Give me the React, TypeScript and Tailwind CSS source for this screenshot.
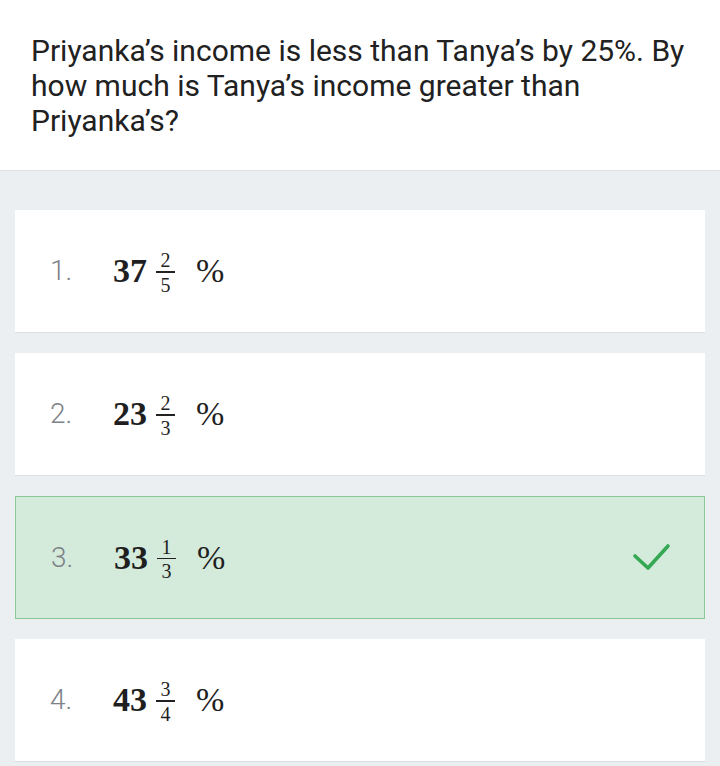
import React from "react";

type Opt = { n: number; whole: string; num: string; den: string; correct?: boolean };

const opts: Opt[] = [
  { n: 1, whole: "37", num: "2", den: "5" },
  { n: 2, whole: "23", num: "2", den: "3" },
  { n: 3, whole: "33", num: "1", den: "3", correct: true },
  { n: 4, whole: "43", num: "3", den: "4" },
];

function Card({ o }: { o: Opt }) {
  return (
    <div
      className={
        "h-[123px] flex items-center pl-[35px] pr-[32px] " +
        (o.correct
          ? "bg-[#d4eadb] border border-[#8cc79a]"
          : "bg-white border-b border-[#dadfe3]")
      }
    >
      <span className="w-[63px] text-[28px] text-[#7d8287] [font-family:Roboto,sans-serif] font-light">
        {o.n}.
      </span>
      <div className="flex items-center text-[#1f1f1f] [font-family:'Liberation_Serif',serif]">
        <span className="text-[34px] font-bold leading-none">{o.whole}</span>
        <span className="flex flex-col items-center ml-[9px] mt-[4px]">
          <span className="text-[20px] leading-[18px]">{o.num}</span>
          <span className="h-[1.5px] w-[19px] bg-[#222] my-[2px]" />
          <span className="text-[20px] leading-[20px]">{o.den}</span>
        </span>
        <span className="text-[34px] leading-none ml-[21px]">%</span>
      </div>
      <div className="flex-1" />
      {o.correct && (
        <svg width="40" height="32" viewBox="0 0 40 32">
          <polyline
            points="3,14 16,26 36,4"
            fill="none"
            stroke="#34a853"
            strokeWidth="3.6"
            strokeLinecap="round"
            strokeLinejoin="round"
          />
        </svg>
      )}
    </div>
  );
}

export default function App() {
  return (
    <div className="w-[720px] h-[766px] bg-[#eceff1] overflow-hidden">
      <div className="bg-white border-b border-[#dde1e4] h-[171px] pt-[33px] pl-[31px] pr-[31px]">
        <p className="text-[30px] leading-[35px] text-[#212121] [font-family:Roboto,sans-serif]">
          Priyanka’s income is less than Tanya’s by 25%. By how much is Tanya’s income greater than Priyanka’s?
        </p>
      </div>
      <div className="flex flex-col gap-5 pt-[39px] px-[15px]">
        {opts.map((o) => (
          <Card key={o.n} o={o} />
        ))}
      </div>
    </div>
  );
}
